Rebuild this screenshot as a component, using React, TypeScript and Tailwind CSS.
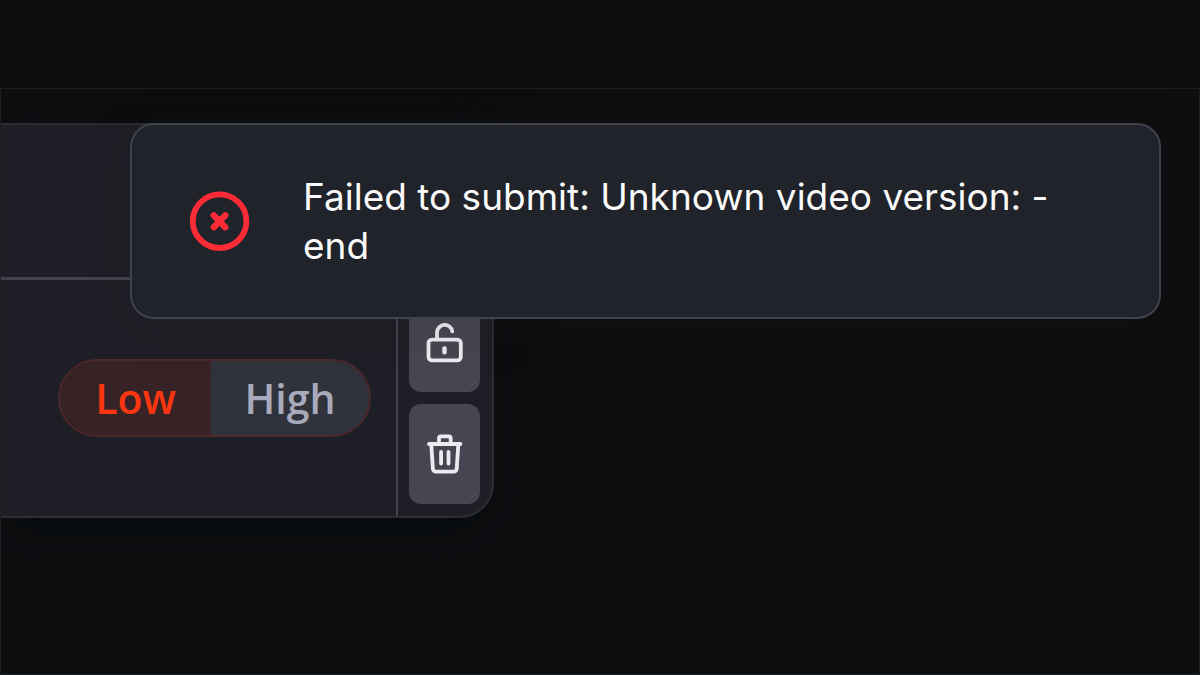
function ErrorIcon() {
  return (
    <svg viewBox="0 0 60 60" fill="none" stroke="currentColor" className="size-[60px] shrink-0 text-[#fb2c36]" aria-hidden="true">
      <circle cx="29.6" cy="30.2" r="26.8" strokeWidth="5.8" />
      <path d="M23.8 24.4l11.4 11.8M35.2 24.4L23.8 36.2" strokeWidth="6.4" strokeLinecap="round" />
    </svg>
  );
}

function UnlockIcon() {
  return (
    <svg viewBox="0 0 45 44" fill="none" stroke="currentColor" strokeWidth="3.8" strokeLinecap="round" className="h-11 w-[45px]" aria-hidden="true">
      <rect x="6.5" y="19.6" width="32.3" height="20.8" rx="3.6" />
      <path d="M15 19V12.6a7.7 7.7 0 0 1 15.3-1.2" />
      <path d="M22.5 28.4v3.8" strokeWidth="4.4" />
    </svg>
  );
}

function TrashIcon() {
  return (
    <svg viewBox="0 0 45 44" fill="none" stroke="currentColor" strokeWidth="3.8" strokeLinecap="round" strokeLinejoin="round" className="h-11 w-[45px]" aria-hidden="true">
      <path d="M7 12h31.4" />
      <path d="M17 11.6V6.4a2 2 0 0 1 2-2h7.7a2 2 0 0 1 2 2v5.2" />
      <path d="M9.3 12.6l1.6 24.2a3.1 3.1 0 0 0 3.1 2.9h17.6a3.1 3.1 0 0 0 3.1-2.9l1.6-24.2" />
      <path d="M19.1 19.8v11.8M26.5 19.8v11.8" />
    </svg>
  );
}

function Toast({ message, detail }: { message: string; detail: string }) {
  return (
    <div
      role="alert"
      className="absolute top-[34px] right-[38px] left-[129px] flex items-center gap-[53px] rounded-3xl border-2 border-[#40434f] bg-[#20232a] px-[58px] py-[47px] shadow-[0_8px_50px_#1e1f2022]"
    >
      <ErrorIcon />
      <p className="font-['Inter',sans-serif] text-[37px] leading-[49px] text-[#fafafa]">
        {message}
        <br />
        {detail}
      </p>
    </div>
  );
}

const actionButton =
  "flex h-[100px] w-[71px] cursor-pointer items-center justify-center rounded-xl bg-[#454651] text-[#ececf0]";

function Panel() {
  return (
    <div className="w-fit overflow-hidden rounded-br-[34px] border-y-2 border-r-2 border-[#2c2d33] bg-[#1e1e26] shadow-[0_16px_50px_4px_#080c0e]">
      <div className="h-[155px] border-b-3 border-[#42434e]" />

      <div className="flex items-stretch">
        <div className="flex items-center pr-[25px] pl-[57px]">
          <div className="flex h-[78px] overflow-hidden rounded-full border-2 border-[#4e292c] font-['Open_Sans',sans-serif] text-[41px] leading-[74px] font-semibold">
            <button className="w-[151px] cursor-pointer bg-[#372325] text-[#fb3610]">Low</button>
            <button className="w-[158px] cursor-pointer bg-[#30333c] text-[#a8aabb]">High</button>
          </div>
        </div>

        <div className="flex flex-col gap-3 border-l-2 border-[#42434e] py-3 pr-3 pl-[11px]">
          <button aria-label="Unlock" className={actionButton}>
            <UnlockIcon />
          </button>
          <button aria-label="Delete" className={actionButton}>
            <TrashIcon />
          </button>
        </div>
      </div>
    </div>
  );
}

export default function App() {
  return (
    <div className="flex min-h-screen flex-col overflow-hidden bg-[#0e0e10]">
      <header className="h-[88px]" />
      <main className="relative flex-1 overflow-hidden border border-[#1c1f22] pt-[34px]">
        <Panel />
        <Toast message="Failed to submit: Unknown video version: -" detail="end" />
      </main>
    </div>
  );
}
